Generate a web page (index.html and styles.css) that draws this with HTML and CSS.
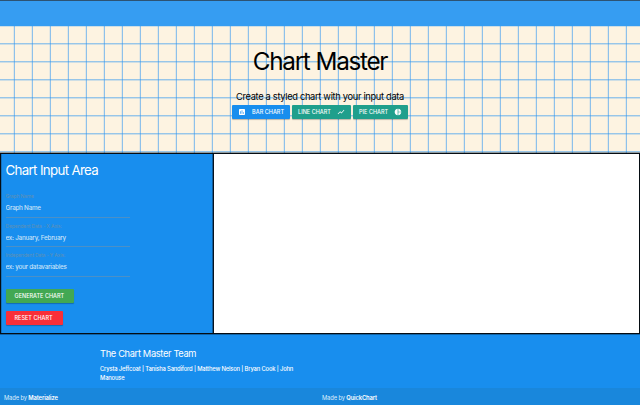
FILE: index.html
```html
<!DOCTYPE html>
<html lang="en">
<head>
<meta charset="utf-8">
<title>Chart Master</title>
<link rel="stylesheet" href="styles.css">
</head>
<body>
<nav class="nav"></nav>
<header class="hero">
  <h1 class="hero-title"><span>Chart Master</span></h1>
  <p class="hero-text"><span>Create a styled chart with your input data</span></p>
  <div class="chart-types">
    <button class="btn btn-bar"><svg class="icon" viewBox="0 0 24 24"><path d="M19 3H5c-1.100 0-2 .9-2 2v14c0 1.100.9 2 2 2h14c1.100 0 2-.9 2-2V5c0-1.100-.9-2-2-2zM9 17H7v-7h2v7zm4 0h-2V7h2v10zm4 0h-2v-4h2v4z"/></svg><span>BAR CHART</span></button>
    <button class="btn btn-line"><span>LINE CHART</span><svg class="icon" viewBox="0 0 24 24"><path d="M3.500 18.500l6-6 4 4L22 6.900l-1.400-1.400-7.100 8-4-4L2 17z"/></svg></button>
    <button class="btn btn-pie"><span>PIE CHART</span><svg class="icon" viewBox="0 0 24 24"><path d="M11 2v20C5.900 21.500 2 17.200 2 12S5.900 2.500 11 2zm2 0v9h9c-.5-4.700-4.200-8.500-9-9zm0 11v9c4.700-.5 8.500-4.200 9-9z"/></svg></button>
  </div>
</header>
<main class="workspace">
  <form class="inputs">
    <h2 class="inputs-title">Chart Input Area</h2>
    <div class="field"><label for="name">Graph Name</label><input id="name" placeholder="Graph Name"></div>
    <div class="field"><label for="x">Dependent Data - X Axis:</label><input id="x" placeholder="ex: January, February"></div>
    <div class="field"><label for="y">Independent Data - Y Axis:</label><input id="y" placeholder="ex: your datavariables"></div>
    <button type="button" class="btn btn-generate">GENERATE CHART</button>
    <button type="button" class="btn btn-reset">RESET CHART</button>
  </form>
  <section class="canvas"></section>
</main>
<footer class="footer">
  <div class="team">
    <h3 class="team-title">The Chart Master Team</h3>
    <p class="team-names">Crysta Jeffcoat | Tanisha Sandiford | Matthew Nelson | Bryan Cook | John<br>Manouse</p>
  </div>
  <div class="credits">
    <div>Made by <b>Materialize</b></div>
    <div>Made by <b>QuickChart</b></div>
  </div>
</footer>
</body>
</html>
```
FILE: styles.css
```css
* { box-sizing: border-box; }
body { margin: 0; width: 640px; height: 405px; overflow: hidden; font-family: Inter, sans-serif; background: #188eee; }
h1, h2, h3, p { margin: 0; font-weight: 400; white-space: nowrap; }
.nav { height: 26px; border-top: 1px solid #2d5373; background: #369df2; }
.hero {
  height: 127px; padding-top: 20px; text-align: center; color: #000;
  background-color: #fdf3e1;
  background-image:
    linear-gradient(90deg, rgba(60, 157, 242, .12) 1px, rgba(40, 147, 242, .52) 1px, rgba(40, 147, 242, .52) 2px, transparent 2px),
    linear-gradient(rgba(40, 147, 242, .48) 1px, rgba(40, 147, 242, .22) 1px, rgba(40, 147, 242, .22) 2px, transparent 2px);
  background-size: 18px 18px;
  background-position: 13px 0, 0 17px;
  box-shadow: inset 0 -1px rgba(0, 0, 0, .3);
}
.hero-title { font-size: 24.300px; line-height: 31px; letter-spacing: -1.300px; word-spacing: .5px; }
.hero-text { margin-top: 14px; font-size: 9.300px; line-height: 12px; letter-spacing: -.32px; }
.chart-types { display: flex; justify-content: center; gap: 2px; margin-top: 2px; }
.btn {
  display: flex; align-items: center; justify-content: space-between; height: 14px; padding: 0 6px;
  border: 0; border-radius: 1px; color: #fff; font: 500 5.500px/14px Inter, sans-serif; letter-spacing: .02px;
  white-space: nowrap; box-shadow: 0 1px 1px rgba(0, 0, 0, .25);
}
.icon { width: 8px; height: 8px; fill: #fff; }
.btn-bar { width: 58px; background: #188eee; }
.btn-line { width: 59px; background: #1f9f8c; }
.btn-pie { width: 55px; background: #1f9f8c; }
.workspace { display: flex; height: 181px; border: 1px solid #050c12; }
.inputs {
  width: 213px; padding: 8px 4.500px 0; border-right: 1px solid #07131e; background: #188eee;
  box-shadow: inset 1px 0 rgba(0, 0, 0, .2), inset -1px 0 rgba(0, 0, 0, .35);
}
.inputs-title { height: 26px; color: #fff; font-size: 13.300px; line-height: 17px; letter-spacing: -.66px; }
.field { width: 124.500px; height: 29.500px; padding-top: 4px; border-bottom: 1px solid #4b90c7; }
.field label { display: block; height: 8px; color: #6090b4; font-size: 5px; line-height: 8px; letter-spacing: -.15px; white-space: nowrap; }
.field input {
  display: block; width: 100%; height: 17px; padding: 0; border: 0; background: none;
  font: 500 6.300px/17px Inter, sans-serif; letter-spacing: -.24px; color: #d5eafb;
}
.field input::placeholder { color: #c8e2f8; opacity: 1; }
.btn-generate { width: 68px; margin-top: 12px; padding: 0 9px; background: #42a853; }
.btn-reset { width: 57px; margin-top: 8.500px; padding: 0 9px; background: #f92f38; }
.canvas { flex: 1; background: #fff; }
.footer { color: #fff; box-shadow: inset 0 1px rgba(0, 0, 0, .3); }
.team { height: 54px; padding: 14px 0 0 100px; }
.team-title { font-size: 9.300px; line-height: 12px; letter-spacing: -.35px; }
.team-names { margin-top: 5px; font-size: 5.800px; font-weight: 500; line-height: 8.500px; letter-spacing: -.15px; }
.credits { display: grid; grid-template-columns: 318px 1fr; height: 17px; padding-left: 4px; background: #1987dc; color: #dceefc; font-size: 5.800px; line-height: 20px; letter-spacing: -.13px; }
.credits b { color: #fff; font-weight: 600; }
```
